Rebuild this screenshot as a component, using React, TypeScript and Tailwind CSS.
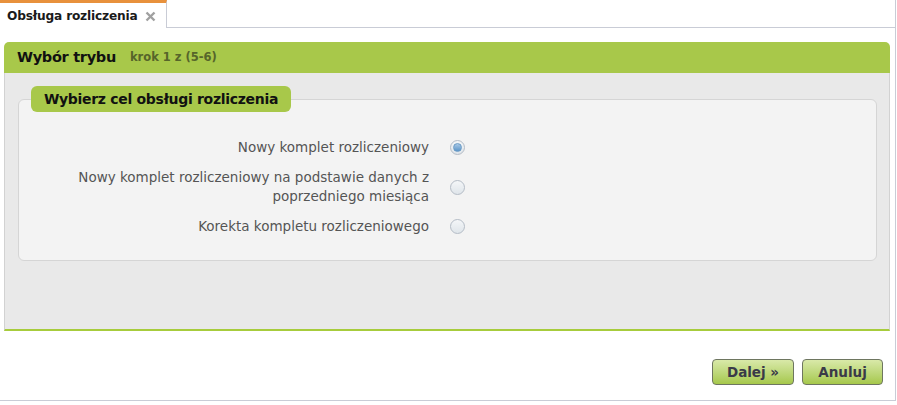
import React from "react";

const font = { fontFamily: '"DejaVu Sans", Verdana, sans-serif' };

function Radio({ checked }: { checked?: boolean }) {
  return (
    <div className="w-[15px] h-[15px] rounded-full border border-[#b4bcc6] bg-gradient-to-b from-[#f4f6f8] to-[#dfe5ea] flex items-center justify-center">
      {checked && (
        <div className="w-[9px] h-[9px] rounded-full bg-gradient-to-b from-[#a8c8e6] to-[#5b95c8] border border-[#6b9bc5]" />
      )}
    </div>
  );
}

function Row({ label, checked }: { label: React.ReactNode; checked?: boolean }) {
  return (
    <div className="flex items-center">
      <div className="w-[368px] text-right text-[#555] text-[13.5px] leading-[19px]">{label}</div>
      <div className="ml-[21px]">
        <Radio checked={checked} />
      </div>
    </div>
  );
}

export default function App() {
  return (
    <div className="w-[897px] h-[405px] bg-white relative" style={font}>
      <div className="w-[896px] h-[401px] border-r border-b border-[#c9ccd6] flex flex-col">
        {/* tab bar */}
        <div className="flex h-[28px]">
          <div className="w-[167px] h-[28px] border-t-[3px] border-t-[#e8913c] border-r border-[#c9ccd6] bg-white flex items-center pl-[7px] pt-[1px]">
            <span className="text-[12.2px] font-bold text-[#1a1a1a] tracking-[-0.2px]">Obsługa rozliczenia</span>
            <svg className="ml-[8px]" width="11" height="11" viewBox="0 0 11 11">
              <path d="M1.5 1.5 L9.5 9.5 M9.5 1.5 L1.5 9.5" stroke="#a0a0a0" strokeWidth="2.4" strokeLinecap="butt" />
            </svg>
          </div>
          <div className="flex-1 border-b border-[#c9ccd6]" />
        </div>

        {/* green panel */}
        <div className="mt-[14px] ml-[4px] w-[886px] flex flex-col">
          <div className="h-[31px] bg-[#a8c84a] rounded-t-[5px] flex items-center pl-[13px]">
            <span className="text-[14.5px] font-bold text-[#111] tracking-[-0.3px]">Wybór trybu</span>
            <span className="ml-[14px] text-[11.5px] font-bold text-[#56652a]">krok 1 z (5-6)</span>
          </div>
          <div className="h-[258px] bg-[#e9e9e9] border-l border-r border-[#d2d2d2] border-b-2 border-b-[#a7cc3c] pt-[26px] pl-[13px] pr-[12px]">
            <div className="relative h-[162px] bg-[#f3f3f3] border border-[#d5d5d5] rounded-[6px] pt-[38px] flex flex-col gap-[11px] pl-[42px]">
              <div className="absolute left-[12px] top-[-14px] h-[26px] w-[260px] bg-[#a8c84a] rounded-[6px] flex items-center justify-center">
                <span className="text-[14px] font-bold text-[#111] tracking-[-0.3px]">Wybierz cel obsługi rozliczenia</span>
              </div>
              <Row label="Nowy komplet rozliczeniowy" checked />
              <Row label="Nowy komplet rozliczeniowy na podstawie danych z poprzedniego miesiąca" />
              <Row label="Korekta kompletu rozliczeniowego" />
            </div>
          </div>
        </div>

        {/* buttons */}
        <div className="flex justify-end gap-[8px] mt-[28px] pr-[12px]">
          <button className="w-[82px] h-[26px] rounded-[4px] border border-[#6e7660] bg-gradient-to-b from-[#d9e9a8] to-[#a6c84a] text-[13.5px] font-bold text-[#3a3a48]">
            Dalej »
          </button>
          <button className="w-[81px] h-[26px] rounded-[4px] border border-[#6e7660] bg-gradient-to-b from-[#d9e9a8] to-[#a6c84a] text-[13.5px] font-bold text-[#3a3a48]">
            Anuluj
          </button>
        </div>
      </div>
    </div>
  );
}
